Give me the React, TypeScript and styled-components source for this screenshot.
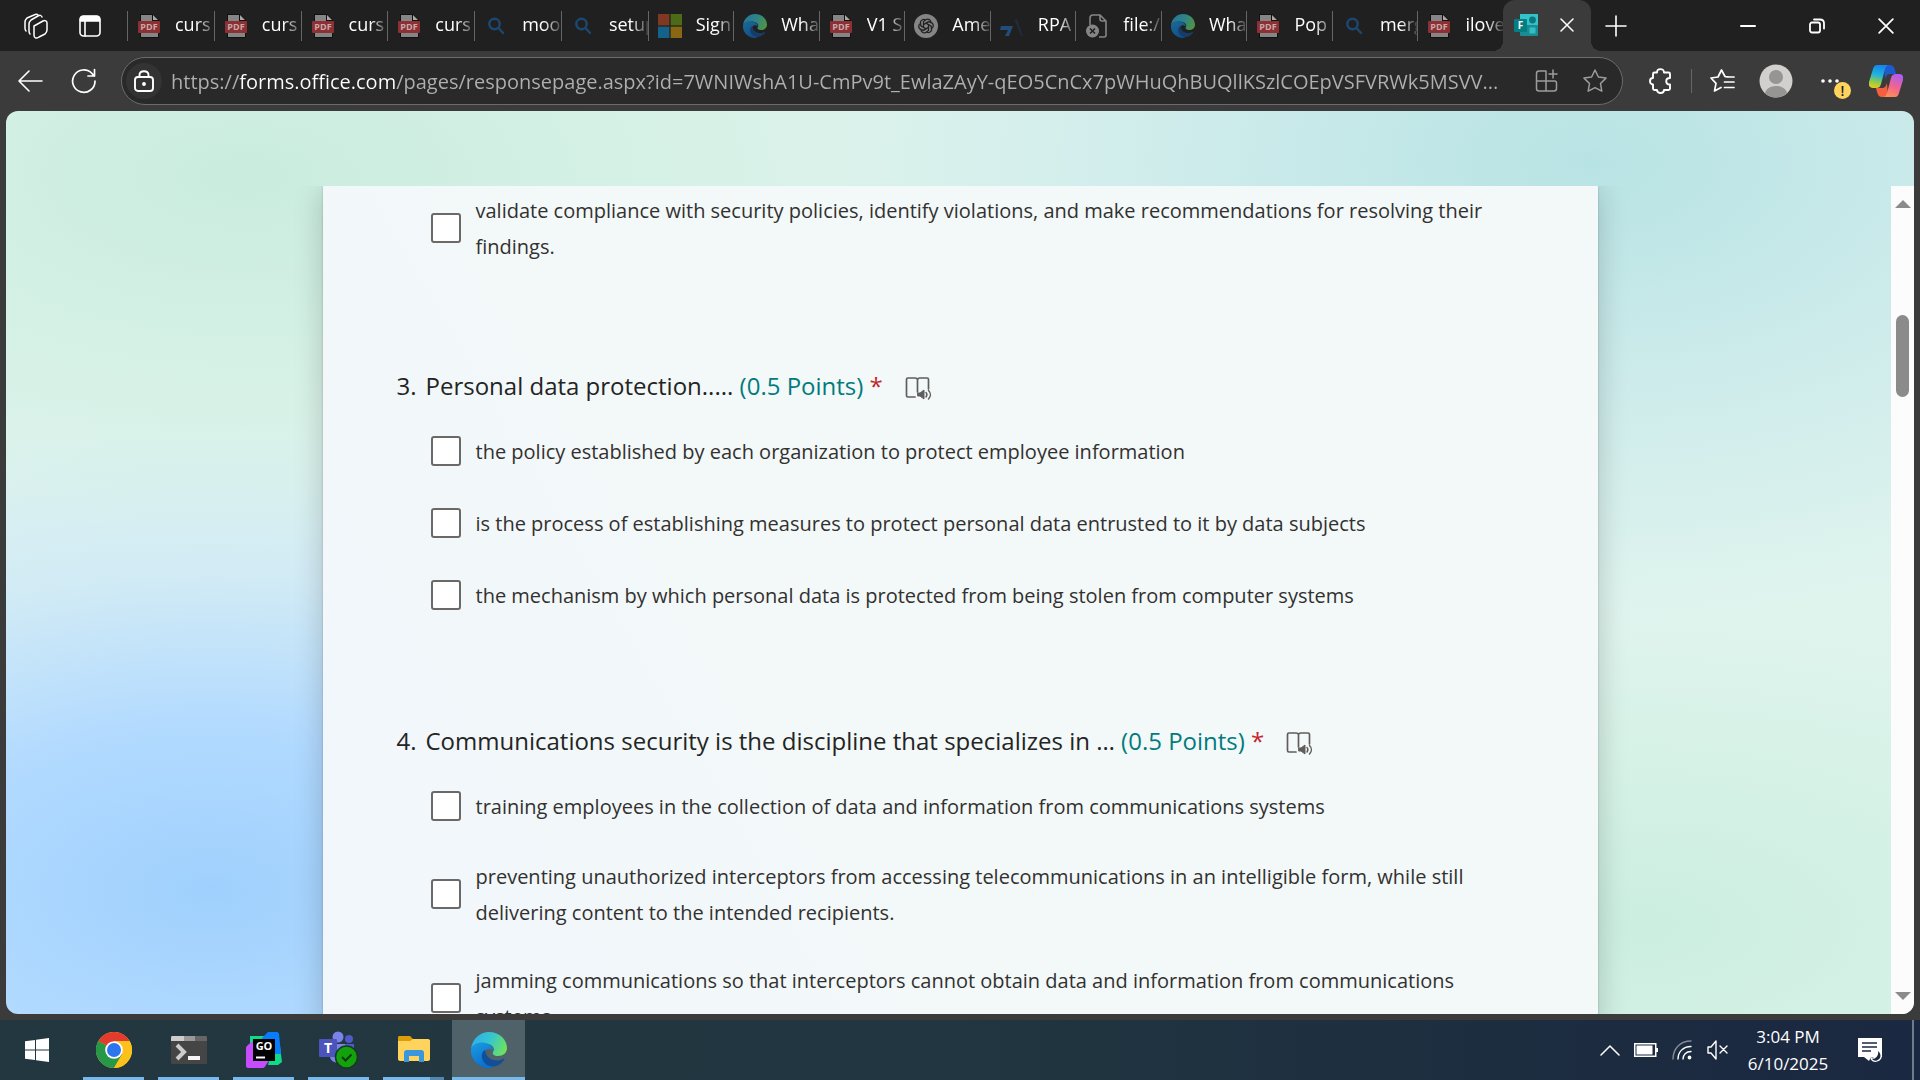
import React, { useId } from "react";
import styled, { createGlobalStyle } from "styled-components";

const FONT = '"Open Sans", "Noto Sans", sans-serif';

const GlobalStyle = createGlobalStyle`
  *, *::before, *::after { box-sizing: border-box; }
  body { margin: 0; background: #3b3b3b; font-family: ${FONT}; }
  button, input { font-family: inherit; }
`;

/* ---------- shell ---------- */

const Shell = styled.div`
  display: flex;
  flex-direction: column;
  height: 100vh;
  overflow: hidden;
`;

const IconButton = styled.button<{ $w?: number; $muted?: boolean }>`
  display: flex;
  flex: none;
  align-items: center;
  justify-content: center;
  width: ${(p) => p.$w ?? 48}px;
  height: 48px;
  padding: 0;
  border: 0;
  background: none;
  color: ${(p) => (p.$muted ? "#9c9c9c" : "#fff")};
`;

/* ---------- tab strip ---------- */

const TabStrip = styled.header`
  display: flex;
  flex: none;
  height: 51px;
  align-items: center;
  background: #202020;
`;

const StripTools = styled.div`
  display: flex;
  gap: 6px;
  padding: 0 13px 0 12px;
`;

const TabList = styled.nav`
  display: flex;
  flex: 0 1 1376px;
  min-width: 0;
`;

const Tab = styled.button<{ $grow: number }>`
  display: flex;
  flex: ${(p) => p.$grow} 1 0;
  min-width: 0;
  height: 30px;
  align-items: center;
  gap: 14px;
  padding: 0 0 0 9px;
  border: 0;
  border-left: 1px solid #666;
  overflow: hidden;
  background: none;
  color: #fff;
  font-size: 18px;
  line-height: 28px;
  text-align: left;

  svg { flex: none; }
`;

const TabLabel = styled.span`
  flex: 1;
  min-width: 0;
  padding-bottom: 4px;
  overflow: hidden;
  white-space: nowrap;
  mask-image: linear-gradient(to right, #000 55%, transparent 108%);
`;

const ActiveTab = styled.div`
  position: relative;
  display: flex;
  flex: none;
  align-self: stretch;
  align-items: center;
  justify-content: space-between;
  width: 88px;
  padding: 0 8px 2px 11px;
  border-radius: 12px 12px 0 0;
  background: #3b3b3b;

  &::before, &::after {
    content: "";
    position: absolute;
    bottom: 0;
    width: 10px;
    height: 10px;
  }
  &::before { right: 100%; background: radial-gradient(circle at 0 0, transparent 10px, #3b3b3b 10px); }
  &::after { left: 100%; background: radial-gradient(circle at 100% 0, transparent 10px, #3b3b3b 10px); }
`;

const Spacer = styled.div`
  flex: 1;
`;

/* ---------- toolbar ---------- */

const Toolbar = styled.div`
  display: flex;
  flex: none;
  height: 60px;
  align-items: center;
  padding: 0 8px 0 3px;
  background: #3b3b3b;
`;

const NavButtons = styled.div`
  display: flex;
  padding-right: 10px;
`;

const AddressBar = styled.div`
  display: flex;
  flex: 1;
  min-width: 0;
  height: 48px;
  margin-right: 8px;
  align-items: center;
  padding: 0 3px 0 4px;
  border: 1px solid #6b6b6b;
  border-radius: 24px;
  background: #292929;
`;

const SiteInfo = styled(IconButton)`
  width: 36px;
  height: 36px;
  border-radius: 18px;
  background: #333;
`;

const UrlInput = styled.input`
  flex: 1;
  min-width: 0;
  height: 36px;
  margin-left: 9px;
  padding: 0;
  border: 0;
  outline: 0;
  font-size: 20px;
  color: transparent;
  background: linear-gradient(to right, #b0b0b0 68px, #fff 68px, #fff 224px, #b0b0b0 224px);
  background-clip: text;
  -webkit-background-clip: text;
`;

const Divider = styled.span`
  flex: none;
  width: 1px;
  height: 24px;
  background: #666;
`;

const MoreButton = styled(IconButton)`
  position: relative;
`;

const Alert = styled.span`
  position: absolute;
  right: 9px;
  bottom: 6px;
  width: 17px;
  height: 17px;
  border-radius: 9px;
  background: #ffd35c;
  color: #222;
  font-size: 14px;
  font-weight: 600;
  line-height: 17px;
  text-align: center;
`;

/* ---------- page ---------- */

const Frame = styled.main`
  display: flex;
  flex: 1;
  min-height: 0;
  padding: 0 6px 6px;
  background: #3b3b3b;
`;

const Page = styled.div`
  display: grid;
  flex: 1;
  min-width: 0;
  grid-template-rows: 75px minmax(0, 1fr);
  grid-template-columns: 23px minmax(0, 1fr) 23px;
  border-radius: 12px;
  overflow: hidden;
  background:
    radial-gradient(ellipse 760px 370px at 240px 64px, #c9ecde 0%, #d3f0e4 40%, rgba(224, 244, 238, 0) 100%),
    radial-gradient(ellipse 800px 460px at 1585px 50px, #b8e3e4 0%, #cdebeb 48%, rgba(224, 244, 238, 0) 100%),
    radial-gradient(ellipse 860px 480px at 205px 780px, #9fd0fd 0%, #b2daff 34%, rgba(205, 232, 247, 0.8) 65%, rgba(220, 243, 238, 0) 100%),
    radial-gradient(ellipse 700px 330px at 1630px 815px, #cbeee0 0%, #d4f1e5 40%, rgba(224, 244, 238, 0) 100%),
    #e0f4ee;
`;

const ScrollArea = styled.div`
  grid-column: 2;
  grid-row: 2;
  display: flex;
  justify-content: center;
  overflow: hidden;
`;

const FormSheet = styled.form`
  flex: 0 1 1275px;
  height: max-content;
  padding: 7px 74px 0;
  background: linear-gradient(60deg, #f0f6fb 0%, #f3f9f9 40%, #f3f9f9 100%);
  box-shadow: 0 0 2px rgba(0, 0, 0, 0.2), 0 4px 28px rgba(0, 0, 0, 0.2);
`;

const Question = styled.section`
  padding-bottom: 107px;
`;

const ContinuedQuestion = styled(Question)`
  padding-bottom: 103px;
`;

const Title = styled.h2`
  display: flex;
  align-items: center;
  margin: 0 0 28px;
  color: #242424;
  font-size: 24px;
  font-weight: 400;
  line-height: 36px;
`;

const Num = styled.span`
  flex: none;
  width: 29px;
`;

const Points = styled.span`
  color: #037b7e;
`;

const Required = styled.span`
  color: #c4262e;
`;

const ReaderButton = styled(IconButton)`
  width: 32px;
  height: 32px;
  margin-left: 20px;
  padding-top: 4px;
  color: #605e5c;
`;

const Options = styled.div`
  display: flex;
  flex-direction: column;
  gap: 32px;
  padding: 0 20px 0 34px;
`;

const Option = styled.label`
  display: flex;
  min-height: 40px;
  align-items: center;
  gap: 15px;
  color: #323130;
  font-size: 20px;
  line-height: 36px;
`;

const Box = styled.input`
  flex: none;
  appearance: none;
  width: 30px;
  height: 30px;
  margin: 0 0 3px;
  border: 2px solid #6b6967;
  border-radius: 3px;
  background: #fff;
`;

const ScrollTrack = styled.div`
  grid-column: 3;
  grid-row: 2;
  display: flex;
  flex-direction: column;
  align-items: center;
  background: #fcfcfc;
`;

const ScrollArrow = styled(IconButton)`
  width: 23px;
  height: 36px;
  color: #8b8b8b;
`;

const ScrollThumb = styled.div`
  width: 13px;
  height: 82px;
  margin-top: 93px;
  border-radius: 7px;
  background: #8b8b8b;
`;

/* ---------- taskbar ---------- */

const Taskbar = styled.footer`
  display: flex;
  flex: none;
  height: 60px;
  align-items: stretch;
  background: linear-gradient(to right, #22373f 0%, #213640 50%, #1c2b40 85%, #1b2841 100%);
`;

const TaskApps = styled.div`
  display: flex;
  gap: 2px;
`;

const TaskButton = styled.button<{ $mode?: "open" | "grouped" | "active" }>`
  display: flex;
  width: 73px;
  align-items: center;
  justify-content: center;
  padding: 0;
  border: 0;
  background-color: ${(p) => (p.$mode === "active" ? "#4f6169" : "transparent")};
  background-image: ${(p) =>
    !p.$mode
      ? "none"
      : p.$mode === "grouped"
      ? "linear-gradient(to right, #76b9ed 47px, #5288b0 47px)"
      : "linear-gradient(#76b9ed, #76b9ed)"};
  background-repeat: no-repeat;
  background-position: center bottom;
  background-size: ${(p) => (p.$mode === "active" ? "100%" : "61px")} 3px;

  &:first-child { margin-right: 2px; }
`;

const Tray = styled.div`
  display: flex;
  align-items: center;
`;

const TrayButton = styled(IconButton)`
  width: 36px;
`;

const Clock = styled.time`
  width: 104px;
  color: #fff;
  font-size: 17px;
  line-height: 27px;
  text-align: center;
`;

const ShowDesktop = styled.button`
  align-self: stretch;
  width: 8px;
  margin-left: 12px;
  padding: 0;
  border: 0;
  border-left: 2px solid #707b89;
  background: none;
`;

/* ---------- icons ---------- */

const line = (w: number) => ({ fill: "none", stroke: "currentColor", strokeWidth: w, strokeLinecap: "round" as const, strokeLinejoin: "round" as const });

const Pdf = () => (
  <svg width="24" height="24" viewBox="0 0 24 24">
    <path d="M3 0h13l6 6v18H3z" fill="#111" />
    <path d="M4 1h11v6h6v16H4z" fill="#858585" />
    <path d="M16 1l5 5h-5z" fill="#a8a8a8" />
    <rect x="1" y="7" width="22" height="12" rx="1" fill="#8c3034" />
    <text x="12" y="16" textAnchor="middle" fontFamily="Open Sans, sans-serif" fontWeight="700" fontSize="9" fill="#c9a9a9">PDF</text>
  </svg>
);

const Search = () => (
  <svg width="24" height="24" viewBox="0 0 24 24" fill="none" stroke="#1c4870" strokeWidth="2.4" strokeLinecap="round">
    <circle cx="10.500" cy="10" r="5.200" />
    <path d="M14.500 14l4.500 5" />
  </svg>
);

const Microsoft = () => (
  <svg width="24" height="24" viewBox="0 0 24 24">
    <path fill="#803822" d="M0 0h11.400v11.400H0z" />
    <path fill="#4b6b17" d="M12.600 0H24v11.400H12.600z" />
    <path fill="#14618a" d="M0 12.600h11.400V24H0z" />
    <path fill="#886612" d="M12.600 12.600H24V24H12.600z" />
  </svg>
);

const Edge = ({ size = 24, dim = false }: { size?: number; dim?: boolean }) => {
  const id = useId();
  return (
    <svg width={size} height={size} viewBox="0 0 36 36" opacity={dim ? 0.6 : 1}>
      <defs>
        <linearGradient id={`${id}a`} x1="0" y1="0.3" x2="1" y2="0.6">
          <stop offset="0" stopColor="#2faee8" />
          <stop offset="0.5" stopColor="#36c6cf" />
          <stop offset="1" stopColor="#6fe25a" />
        </linearGradient>
        <linearGradient id={`${id}b`} x1="0" y1="0" x2="0.5" y2="1">
          <stop offset="0" stopColor="#1b9de2" />
          <stop offset="1" stopColor="#0a6fd0" />
        </linearGradient>
      </defs>
      <path d="M0 17C1 7 9 0 18 0c11 0 18 8 18 16 0 5-4 8-9 8-4 0-6-2-5-4 2-2 1-7-5-8C9 10 2 13 0 17z" fill={`url(#${id}a)`} />
      <path d="M0 17c2-7 14-9 20-3 2 2 2 4 2 5-2-3-6-3-8 0-3 5 0 12 6 15 2 1 1 2-2 2C8 36-1 28 0 17z" fill={`url(#${id}b)`} />
      <path d="M14 18c-5 3-4 11 2 15 6 3 13 1 17-5 1-1 0-2-1-1-8 4-17 0-18-9z" fill="#114f98" />
    </svg>
  );
};

const OpenAI = () => (
  <svg width="24" height="24" viewBox="0 0 24 24">
    <circle cx="12" cy="12" r="12" fill="#858585" />
    <g fill="none" stroke="#222" strokeWidth="1.300">
      {[0, 60, 120, 180, 240, 300].map((a) => (
        <path key={a} transform={`rotate(${a} 12 12)`} d="M9.500 13.500V7.500l3-2.200c2.200-.8 4.600.8 4.400 3.200" />
      ))}
    </g>
  </svg>
);

const Rpa = () => (
  <svg width="24" height="24" viewBox="0 0 24 24">
    <path d="M1 12h12l-4 10H5l3-6H0z" fill="#214e78" />
    <path d="M14 6l3-1 6 17h-2L16 9z" fill="#232b3c" />
  </svg>
);

const BrokenFile = () => (
  <svg width="24" height="24" viewBox="0 0 24 24" fill="none" stroke="#858585" strokeWidth="1.600">
    <path d="M5 11V4c0-2 1-3 3-3h7l6 6v14c0 1-1 2-2 2h-5M15 1v4c0 1 1 2 2 2h4" />
    <circle cx="7.500" cy="17" r="6.500" fill="#858585" stroke="none" />
    <path d="M5 14.500l5 5M10 14.500l-5 5" stroke="#202020" />
  </svg>
);

const FormsLogo = () => (
  <svg width="24" height="24" viewBox="0 0 24 24">
    <rect x="6" y="1" width="18" height="22" rx="1" fill="#1a8c93" />
    <path d="M6 1h17a1 1 0 011 1v10H6z" fill="#32c3cb" />
    <circle cx="18.500" cy="7" r="3.400" fill="#0e777d" />
    <rect x="15.500" y="14.500" width="6" height="6" fill="#36bcc3" />
    <rect x="0" y="6" width="13" height="13" rx="1" fill="#047e83" />
    <text x="6.500" y="16" textAnchor="middle" fontFamily="Open Sans, sans-serif" fontWeight="700" fontSize="10" fill="#fff">F</text>
  </svg>
);

const Workspaces = () => (
  <svg width="26" height="26" viewBox="0 0 26 26" {...line(1.5)}>
    <path d="M11 13l9-5c2-1 4 0 4 2v7c0 2-1 3-2 4l-6 3c-3 2-5 1-5-2z" />
    <path d="M7 21c-1-1-1-2-1-3v-7c0-2 1-3 2-4l7-4c2-1 3-1 4 1" />
    <path d="M3 18c-1-1-1-2-1-3V9c0-2 1-3 2-4l7-3c2-1 3-1 4 0" />
  </svg>
);

const VerticalTabs = () => (
  <svg width="22" height="22" viewBox="0 0 22 22" {...line(1.6)}>
    <rect x="1" y="1" width="20" height="20" rx="3.500" />
    <path d="M1.500 6V4c0-2 1-2.500 2.500-2.500h14c2 0 2.500 1 2.500 2.500v2z" fill="currentColor" />
    <path d="M6 6v15" />
  </svg>
);

const Close = ({ size = 14 }: { size?: number }) => (
  <svg width={size} height={size} viewBox="0 0 14 14" {...line(1.5)}><path d="M1 1l12 12M13 1L1 13" /></svg>
);

const Plus = () => <svg width="22" height="22" viewBox="0 0 22 22" {...line(1.6)}><path d="M11 1v20M1 11h20" /></svg>;
const Minimize = () => <svg width="16" height="16" viewBox="0 0 16 16" {...line(2)}><path d="M1 8h14" /></svg>;
const Restore = () => (
  <svg width="16" height="16" viewBox="0 0 16 16" {...line(1.8)}>
    <rect x="1" y="4.500" width="10" height="10" rx="2" />
    <path d="M5 1.500h6c2.500 0 4 1.500 4 4v5" />
  </svg>
);
const Back = () => <svg width="26" height="24" viewBox="0 0 26 24" {...line(1.6)}><path d="M12 2L2 12l10 10M2 12h23" /></svg>;
const Refresh = () => (
  <svg width="26" height="26" viewBox="0 0 26 26" {...line(1.7)}>
    <path d="M24 13A11.200 11.200 0 1 1 21 5.500l2 2.500M23.500 1.500V8H17" />
  </svg>
);
const Lock = () => (
  <svg width="20" height="22" viewBox="0 0 20 22" {...line(1.9)}>
    <rect x="1" y="7" width="18" height="14" rx="3" />
    <path d="M5.500 7V5c0-5 9-5 9 0v2" />
    <circle cx="10" cy="14" r="1" fill="currentColor" />
  </svg>
);
const Apps = () => (
  <svg width="24" height="24" viewBox="0 0 24 24" {...line(1.5)}>
    <path d="M11 2H4C2.500 2 1.500 3 1.500 4.500v15C1.500 21 2.500 22 4 22h15c1.500 0 2.500-1 2.500-2.500V14c0-1-.5-2-2-2H1.500M11 2v20M18 1v8M14 5h8" />
  </svg>
);
const Star = () => (
  <svg width="26" height="26" viewBox="0 0 26 26" {...line(1.5)}>
    <path d="M13 2l3.400 7 7.600 1.100-5.500 5.400 1.300 7.700L13 19.600l-6.800 3.600 1.300-7.700L2 10.100 9.600 9z" />
  </svg>
);
const Puzzle = () => (
  <svg width="24" height="26" viewBox="0 0 24 26" {...line(1.9)}>
    <path d="M8 4.500C8 0 15 0 15 4.500h4.500c1 0 1.500.5 1.500 1.500v4c-5 0-5 6.500 0 6.500v4c0 1-.5 1.500-1.500 1.500H15c0 4-7 4-7 0H5.500c-1 0-1.500-.5-1.500-1.500v-4c-4 0-4-6.500 0-6.500V6c0-1 .5-1.500 1.500-1.500z" />
  </svg>
);
const Favorites = () => (
  <svg width="26" height="26" viewBox="0 0 26 26" {...line(1.7)}>
    <path d="M21 9l-5-.5L12.500 2 9 9l-7 1 5 5.400L5.500 23l6.500-3.500M17 9h8M15.500 14H25M15.500 19.500H25" />
  </svg>
);
const Avatar = () => (
  <svg width="34" height="34" viewBox="0 0 34 34">
    <clipPath id="avatar"><circle cx="17" cy="17" r="16.500" /></clipPath>
    <g clipPath="url(#avatar)">
      <path fill="#d2d0ce" d="M0 0h34v34H0z" />
      <circle cx="17" cy="13" r="7" fill="#979593" />
      <path fill="#979593" d="M5 34c0-8 5-12 12-12s12 4 12 12z" />
    </g>
  </svg>
);
const Dots = () => (
  <svg width="20" height="6" viewBox="0 0 20 6" fill="currentColor"><circle cx="3" cy="3" r="1.800" /><circle cx="10" cy="3" r="1.800" /><circle cx="17" cy="3" r="1.800" /></svg>
);
const Copilot = () => (
  <svg width="34" height="32" viewBox="0 0 34 32">
    <defs>
      <linearGradient id="cpa" x1="0.3" y1="0" x2="0.1" y2="1">
        <stop offset="0" stopColor="#1488ee" /><stop offset="0.4" stopColor="#23b5da" /><stop offset="0.7" stopColor="#8fcb4c" /><stop offset="1" stopColor="#f4cd12" />
      </linearGradient>
      <linearGradient id="cpb" x1="0.6" y1="0" x2="0.2" y2="1">
        <stop offset="0" stopColor="#b35cf0" /><stop offset="0.5" stopColor="#f0658c" /><stop offset="1" stopColor="#ff9350" />
      </linearGradient>
    </defs>
    <path d="M15 0h6c3 0 4 2 5 5l1 4h-6c-3 0-4 2-5 5z" fill="#1d5bd0" />
    <path d="M19 32h-6c-3 0-4-2-5-5l-1-4h6c3 0 4-2 5-5z" fill="#f45f3f" />
    <path d="M8 0h12c-2 0-3 1-4 4l-4 15c-1 3-2 4-5 4H4c-3 0-5-2-4-6L4 4c1-3 2-4 4-4z" fill="url(#cpa)" />
    <path d="M26 32H14c2 0 3-1 4-4l4-15c1-3 2-4 5-4h3c3 0 5 2 4 6l-4 13c-1 3-2 4-4 4z" fill="url(#cpb)" />
  </svg>
);

const Reader = () => (
  <svg width="28" height="26" viewBox="0 0 28 26" {...line(1.7)}>
    <path d="M10 22H3c-1 0-1.500-.5-1.500-1.500v-16C1.500 3.500 2 3 3 3h7c2 0 2.500 1 2.500 2v12M12.500 5c0-1 .5-2 2.500-2h7c1 0 1.500.5 1.500 1.500V14" />
    <path d="M13 18h2l4-3v9l-4-3h-2z" fill="currentColor" strokeWidth="1" />
    <path d="M21 17.500c1 1 1 3 0 4.500M23.500 15.500c2.500 2.500 2.500 6 0 8.500" strokeWidth="1.500" />
  </svg>
);

const WindowsLogo = () => (
  <svg width="24" height="24" viewBox="0 0 24 24" fill="#fff">
    <path d="M0 3.300l10-1.400v9.600H0zM11 1.700L24 0v11.500H11zM0 12.500h10v9.600L0 20.700zM11 12.500h13V24l-13-1.700z" />
  </svg>
);
const Chrome = () => (
  <svg width="36" height="36" viewBox="0 0 36 36">
    <circle cx="18" cy="18" r="18" fill="#fbbf16" />
    <path d="M18 18L2.400 9A18 18 0 0 1 33.600 9z" fill="#e33b2e" />
    <path d="M2.400 9A18 18 0 0 0 18 36l8-13.500-8-4.500z" fill="#279847" />
    <path d="M18 9h15.600A18 18 0 0 1 18 36l8-13.500z" fill="#fcc21b" />
    <circle cx="18" cy="18" r="8.800" fill="#fff" />
    <circle cx="18" cy="18" r="7" fill="#2c75ee" />
  </svg>
);
const Terminal = () => (
  <svg width="36" height="28" viewBox="0 0 36 28">
    <rect width="36" height="28" rx="1.500" fill="#454545" />
    <path d="M0 1.500C0 .5.500 0 1.500 0H13v5H0z" fill="#ccc" />
    <path d="M13 0h11v5H13z" fill="#999" />
    <path d="M24 0h10.500c1 0 1.500.5 1.500 1.500V5H24z" fill="#666" />
    <path d="M6 9l7 7-7 7" fill="none" stroke="#ccc" strokeWidth="4" />
    <rect x="17" y="20" width="12" height="4" fill="#f4f4f4" />
  </svg>
);
const GoLand = () => (
  <svg width="36" height="36" viewBox="0 0 36 36">
    <path d="M4 4h14v12H4z" fill="#10d987" />
    <path d="M28 8l6 6 2 16-4 3H22z" fill="#10d987" />
    <path d="M22 0h9c1 0 2 1 2 2l2 20H16V6z" fill="#087cfa" />
    <path d="M0 16c0-2 4-5 8-7l16 18-4 6c-1 2-2 3-3 3H2c-1 0-2-1-2-2z" fill="#c74bff" />
    <path d="M7 7h22v22H7z" fill="#000" />
    <text x="18" y="18" textAnchor="middle" fontFamily="Open Sans, sans-serif" fontWeight="700" fontSize="11" fill="#fff">GO</text>
    <path d="M10 24.500h9v2h-9z" fill="#fff" />
  </svg>
);
const Teams = () => (
  <svg width="40" height="38" viewBox="0 0 40 38">
    <circle cx="19" cy="6" r="5.500" fill="#7b83eb" />
    <circle cx="30" cy="8" r="4" fill="#5059c9" />
    <path d="M24 13h11v10H24z" fill="#5059c9" />
    <path d="M11 13h15v12c0 9-15 9-15 0z" fill="#7b83eb" />
    <rect x="0" y="8" width="18" height="18" rx="1" fill="#4b53bc" />
    <text x="9" y="22" textAnchor="middle" fontFamily="Open Sans, sans-serif" fontWeight="700" fontSize="14" fill="#fff">T</text>
    <circle cx="27.500" cy="26" r="11" fill="#13a10e" stroke="#163a22" strokeWidth="1.500" />
    <path d="M23 26l3.500 3.500 6-6" fill="none" stroke="#0b3b0a" strokeWidth="2" />
  </svg>
);
const Explorer = () => (
  <svg width="32" height="28" viewBox="0 0 32 28">
    <path d="M0 1.500C0 .5.500 0 1.500 0H12l3 3h15c1 0 2 1 2 2v4H0z" fill="#dc9d09" />
    <path d="M0 5h12l3-2h15c1 0 2 1 2 2v18c0 1-1 2-2 2H2c-1 0-2-1-2-2z" fill="#ffd35c" />
    <path d="M6 26V17c0-2 1-3 3-3h14c2 0 3 1 3 3v9h-5v-6H11v6z" fill="#3b97dd" />
  </svg>
);

const Chevron = () => <svg width="20" height="12" viewBox="0 0 20 12" {...line(1.5)}><path d="M1 11l9-9 9 9" /></svg>;
const Battery = () => (
  <svg width="24" height="14" viewBox="0 0 24 14">
    <rect x="0.750" y="0.750" width="21" height="12.500" fill="none" stroke="#fff" strokeWidth="1.500" />
    <path d="M2.500 2.500h16v9h-16zM22 5h2v4h-2z" fill="#fff" />
  </svg>
);
const Wifi = () => (
  <svg width="20" height="20" viewBox="0 0 20 20" {...line(1.4)}>
    <path d="M1 19C1 9 8 1 19 1" opacity="0.45" />
    <path d="M6 19C6 12 11 6.500 19 6.500M11 19c0-4 3-7.500 8-7.500" />
    <circle cx="17.500" cy="17.500" r="1.200" fill="currentColor" />
  </svg>
);
const Muted = () => (
  <svg width="22" height="20" viewBox="0 0 22 20" {...line(1.4)}>
    <path d="M1 7h3l5-6v18l-5-6H1zM13 6l7 7M20 6l-7 7" />
  </svg>
);
const Notifications = () => (
  <svg width="26" height="26" viewBox="0 0 26 26">
    <path d="M1 1h24v19H14l-2 4-5-4H1z" fill="#fff" />
    <path d="M5 6h15M5 10h15M5 14h9" stroke="#1b2841" strokeWidth="1.300" />
    <path d="M20 13c5 2 6 9 0 11-3 1-6-1-6-3 4 1 8-3 6-8z" fill="#1b2841" stroke="#fff" strokeWidth="1.300" />
  </svg>
);

const Triangle = ({ down }: { down?: boolean }) => (
  <svg width="16" height="8" viewBox="0 0 16 8" fill="currentColor"><path d={down ? "M0 0h16L8 8z" : "M0 8h16L8 0z"} /></svg>
);

/* ---------- data ---------- */

const tabs: { icon: React.ReactNode; label: string; grow: number }[] = [
  { icon: <Pdf />, label: "curs", grow: 61 },
  { icon: <Pdf />, label: "curs", grow: 61 },
  { icon: <Pdf />, label: "curs", grow: 61 },
  { icon: <Pdf />, label: "curs", grow: 61 },
  { icon: <Search />, label: "mood", grow: 61 },
  { icon: <Search />, label: "setup", grow: 61 },
  { icon: <Microsoft />, label: "Sign", grow: 60 },
  { icon: <Edge dim />, label: "What", grow: 60 },
  { icon: <Pdf />, label: "V1 S", grow: 60 },
  { icon: <OpenAI />, label: "Ame", grow: 60 },
  { icon: <Rpa />, label: "RPA", grow: 60 },
  { icon: <BrokenFile />, label: "file:/", grow: 60 },
  { icon: <Edge dim />, label: "What", grow: 60 },
  { icon: <Pdf />, label: "Pop", grow: 60 },
  { icon: <Search />, label: "merg", grow: 60 },
  { icon: <Pdf />, label: "ilove", grow: 60 },
];

const questions = [
  {
    number: 3,
    text: "Personal data protection.....",
    options: [
      "the policy established by each organization to protect employee information",
      "is the process of establishing measures to protect personal data entrusted to it by data subjects",
      "the mechanism by which personal data is protected from being stolen from computer systems",
    ],
  },
  {
    number: 4,
    text: "Communications security is the discipline that specializes in …",
    options: [
      "training employees in the collection of data and information from communications systems",
      "preventing unauthorized interceptors from accessing telecommunications in an intelligible form, while still delivering content to the intended recipients.",
      "jamming communications so that interceptors cannot obtain data and information from communications systems",
    ],
  },
];

const Choice = ({ text }: { text: string }) => (
  <Option>
    <Box type="checkbox" />
    <span>{text}</span>
  </Option>
);

export default function App() {
  return (
    <>
      <GlobalStyle />
      <Shell>
        <TabStrip>
          <StripTools>
            <IconButton aria-label="Workspaces"><Workspaces /></IconButton>
            <IconButton aria-label="Tab actions"><VerticalTabs /></IconButton>
          </StripTools>
          <TabList>
            {tabs.map((t, i) => (
              <Tab key={i} $grow={t.grow}>
                {t.icon}
                <TabLabel>{t.label}</TabLabel>
              </Tab>
            ))}
          </TabList>
          <ActiveTab>
            <FormsLogo />
            <IconButton $w={32} aria-label="Close tab"><Close /></IconButton>
          </ActiveTab>
          <IconButton $w={50} aria-label="New tab"><Plus /></IconButton>
          <Spacer />
          <IconButton $w={69} aria-label="Minimize"><Minimize /></IconButton>
          <IconButton $w={69} aria-label="Restore"><Restore /></IconButton>
          <IconButton $w={69} aria-label="Close window"><Close size={16} /></IconButton>
        </TabStrip>

        <Toolbar>
          <NavButtons>
            <IconButton $w={54} aria-label="Back"><Back /></IconButton>
            <IconButton $w={54} aria-label="Refresh"><Refresh /></IconButton>
          </NavButtons>
          <AddressBar>
            <SiteInfo aria-label="Site information"><Lock /></SiteInfo>
            <UrlInput
              aria-label="Address"
              defaultValue="https://forms.office.com/pages/responsepage.aspx?id=7WNIWshA1U-CmPv9t_EwlaZAyY-qEO5CnCx7pWHuQhBUQllKSzlCOEpVSFVRWk5MSVV..."
            />
            <IconButton $muted aria-label="Apps"><Apps /></IconButton>
            <IconButton $muted aria-label="Add to favorites"><Star /></IconButton>
          </AddressBar>
          <IconButton $w={60} aria-label="Extensions"><Puzzle /></IconButton>
          <Divider />
          <IconButton $w={60} aria-label="Favorites"><Favorites /></IconButton>
          <IconButton $w={48} aria-label="Profile"><Avatar /></IconButton>
          <MoreButton $w={60} aria-label="Settings and more"><Dots /><Alert>!</Alert></MoreButton>
          <IconButton $w={52} aria-label="Copilot"><Copilot /></IconButton>
        </Toolbar>

        <Frame>
          <Page>
            <ScrollArea>
              <FormSheet>
                <ContinuedQuestion>
                  <Options>
                    <Choice text="validate compliance with security policies, identify violations, and make recommendations for resolving their findings." />
                  </Options>
                </ContinuedQuestion>
                {questions.map((q) => (
                  <Question key={q.number}>
                    <Title>
                      <Num>{q.number}.</Num>
                      <span>
                        {q.text} <Points>(0.5 Points)</Points> <Required>*</Required>
                      </span>
                      <ReaderButton type="button" aria-label="Immersive reader"><Reader /></ReaderButton>
                    </Title>
                    <Options>
                      {q.options.map((o) => <Choice key={o} text={o} />)}
                    </Options>
                  </Question>
                ))}
              </FormSheet>
            </ScrollArea>
            <ScrollTrack>
              <ScrollArrow aria-label="Scroll up"><Triangle /></ScrollArrow>
              <ScrollThumb />
              <Spacer />
              <ScrollArrow aria-label="Scroll down"><Triangle down /></ScrollArrow>
            </ScrollTrack>
          </Page>
        </Frame>

        <Taskbar>
          <TaskApps>
            <TaskButton aria-label="Start"><WindowsLogo /></TaskButton>
            <TaskButton $mode="open" aria-label="Chrome"><Chrome /></TaskButton>
            <TaskButton $mode="open" aria-label="Terminal"><Terminal /></TaskButton>
            <TaskButton $mode="open" aria-label="GoLand"><GoLand /></TaskButton>
            <TaskButton $mode="open" aria-label="Teams"><Teams /></TaskButton>
            <TaskButton $mode="grouped" aria-label="File Explorer"><Explorer /></TaskButton>
            <TaskButton $mode="active" aria-label="Edge"><Edge size={36} /></TaskButton>
          </TaskApps>
          <Spacer />
          <Tray>
            <TrayButton aria-label="Hidden icons"><Chevron /></TrayButton>
            <TrayButton aria-label="Battery"><Battery /></TrayButton>
            <TrayButton aria-label="Network"><Wifi /></TrayButton>
            <TrayButton aria-label="Volume"><Muted /></TrayButton>
            <Clock>
              3:04 PM
              <br />
              6/10/2025
            </Clock>
            <IconButton $w={60} aria-label="Notifications"><Notifications /></IconButton>
          </Tray>
          <ShowDesktop aria-label="Show desktop" />
        </Taskbar>
      </Shell>
    </>
  );
}
